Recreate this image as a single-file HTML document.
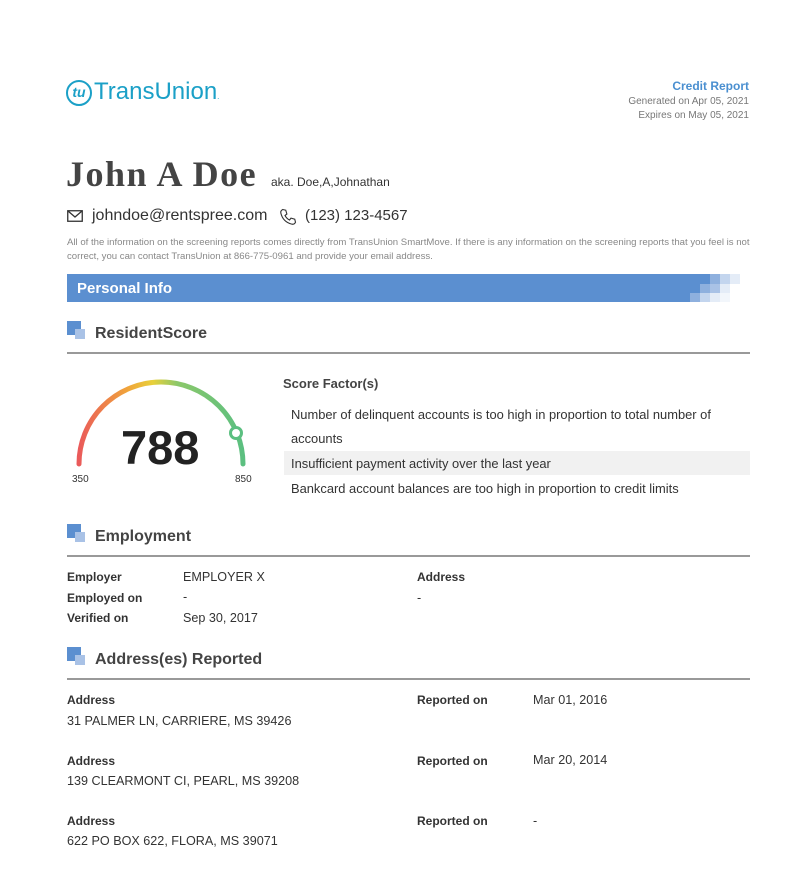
<!DOCTYPE html>
<html><head><meta charset="utf-8"><style>
*{margin:0;padding:0;box-sizing:border-box}
body{width:810px;height:883px;background:#fff;font-family:"Liberation Sans",sans-serif;color:#333;position:relative;overflow:hidden}
.a{position:absolute;white-space:nowrap}
.sec{position:absolute;left:67px;width:683px;border-bottom:2px solid #999;height:36px}
.sec .ic1{position:absolute;left:0;top:3px;width:14px;height:14px;background:#5b8fd0}
.sec .ic2{position:absolute;left:8px;top:11px;width:10px;height:10px;background:#a9c2e6}
.sec .t{position:absolute;left:28px;top:7px;font-size:16px;font-weight:bold;color:#444}
.lb{font-size:12px;font-weight:bold;color:#333}
.v{font-size:12.6px;color:#333}
</style></head><body>
<div class="a" style="left:66px;top:80px;width:26px;height:26px;border:2.5px solid #1ba0c7;border-radius:50%;color:#1ba0c7;font-size:14px;font-weight:bold;text-align:center;line-height:20px;font-style:italic">tu</div>
<div class="a" style="left:94px;top:78px;font-size:24px;color:#1ba0c7">TransUnion<span style="font-size:8px">.</span></div>
<div class="a" style="right:61px;top:79px;font-size:12px;font-weight:bold;color:#4a8fd0">Credit Report</div>
<div class="a" style="right:61px;top:96px;font-size:10px;color:#777">Generated on Apr 05, 2021</div>
<div class="a" style="right:61px;top:110px;font-size:10px;color:#777">Expires on May 05, 2021</div>
<div class="a" style="left:66px;top:153px;font-size:36px;font-weight:bold;font-family:'Liberation Serif',serif;color:#444;letter-spacing:1.5px">John A Doe</div>
<div class="a" style="left:271px;top:175px;font-size:12px;color:#333">aka. Doe,A,Johnathan</div>
<svg class="a" style="left:67px;top:210px" width="16" height="12"><rect x="0.75" y="0.75" width="14.5" height="10.5" fill="none" stroke="#333" stroke-width="1.3"/><path d="M1 1l7 6 7-6" fill="none" stroke="#333" stroke-width="1.3"/></svg>
<div class="a" style="left:92px;top:207px;font-size:16px">johndoe@rentspree.com</div>
<svg class="a" style="left:279px;top:208px" width="18" height="18" viewBox="0 0 24 24"><path d="M5 2l4 1 1.5 5-2.5 2c1.5 3 3 4.5 6 6l2-2.5 5 1.5 1 4c-1 2-3 3-5 2.5C9 19.5 4.5 15 2.5 7 2 5 3 3 5 2z" fill="none" stroke="#333" stroke-width="1.5"/></svg>
<div class="a" style="left:305px;top:207px;font-size:15px">(123) 123-4567</div>
<div class="a" style="left:67px;top:236px;font-size:9.6px;color:#888;line-height:14px;white-space:normal;width:690px">All of the information on the screening reports comes directly from TransUnion SmartMove. If there is any information on the screening reports that you feel is not correct, you can contact TransUnion at 866-775-0961 and provide your email address.</div>
<div class="a" style="left:67px;top:274px;width:625px;height:28px;background:#5b8fd0"></div>
<svg class="a" style="left:690px;top:274px" width="60" height="28">
<rect x="0" y="0" width="20" height="28" fill="#5b8fd0"/>
<rect x="20" y="0" width="10" height="10" fill="#8eb0de"/><rect x="30" y="0" width="10" height="10" fill="#c3d5ee"/><rect x="40" y="0" width="10" height="10" fill="#e4ecf7"/>
<rect x="10" y="10" width="10" height="9" fill="#8eb0de"/><rect x="20" y="10" width="10" height="9" fill="#a9c2e6"/><rect x="30" y="10" width="10" height="9" fill="#e4ecf7"/>
<rect x="0" y="19" width="10" height="9" fill="#8eb0de"/><rect x="10" y="19" width="10" height="9" fill="#c3d5ee"/><rect x="20" y="19" width="10" height="9" fill="#e4ecf7"/><rect x="30" y="19" width="10" height="9" fill="#f2f6fb"/>
</svg>
<div class="a" style="left:77px;top:280px;font-size:15px;font-weight:bold;color:#fff">Personal Info</div>
<div class="sec" style="top:318px"><div class="ic1"></div><div class="ic2"></div><div class="t">ResidentScore</div></div>
<svg class="a" style="left:70px;top:372px" width="190" height="100">
<defs><linearGradient id="g" x1="0" x2="1" y1="0" y2="0"><stop offset="0" stop-color="#ea5a5a"/><stop offset="0.3" stop-color="#f0a53a"/><stop offset="0.45" stop-color="#e8d03a"/><stop offset="0.6" stop-color="#8cc86a"/><stop offset="1" stop-color="#5bbf80"/></linearGradient></defs>
<path d="M9 92 A82 82 0 0 1 173 92" fill="none" stroke="url(#g)" stroke-width="5" stroke-linecap="round"/>
<circle cx="166" cy="61" r="5.5" fill="#fff" stroke="#5bbf80" stroke-width="3"/>
</svg>
<div class="a" style="left:121px;top:420px;font-size:47px;font-weight:bold;color:#222">788</div>
<div class="a" style="left:72px;top:474px;font-size:10px">350</div>
<div class="a" style="left:235px;top:474px;font-size:10px">850</div>
<div class="a" style="left:283px;top:376px;font-size:13px;font-weight:bold;color:#444">Score Factor(s)</div>
<div class="a" style="left:291px;top:407px;font-size:12.9px">Number of delinquent accounts is too high in proportion to total number of</div>
<div class="a" style="left:291px;top:431px;font-size:12.9px">accounts</div>
<div class="a" style="left:284px;top:451px;width:466px;height:24px;background:#f1f1f1"></div>
<div class="a" style="left:291px;top:456px;font-size:12.9px">Insufficient payment activity over the last year</div>
<div class="a" style="left:291px;top:481px;font-size:12.9px">Bankcard account balances are too high in proportion to credit limits</div>
<div class="sec" style="top:521px"><div class="ic1"></div><div class="ic2"></div><div class="t">Employment</div></div>
<div class="a lb" style="left:67px;top:570px">Employer</div>
<div class="a v" style="left:183px;top:570px">EMPLOYER X</div>
<div class="a lb" style="left:417px;top:570px">Address</div>
<div class="a lb" style="left:67px;top:591px">Employed on</div>
<div class="a v" style="left:183px;top:590px">-</div>
<div class="a v" style="left:417px;top:591px">-</div>
<div class="a lb" style="left:67px;top:611px">Verified on</div>
<div class="a v" style="left:183px;top:611px">Sep 30, 2017</div>
<div class="sec" style="top:644px"><div class="ic1"></div><div class="ic2"></div><div class="t">Address(es) Reported</div></div>
<div class="a lb" style="left:67px;top:693px">Address</div><div class="a lb" style="left:417px;top:693px">Reported on</div><div class="a v" style="left:533px;top:693px">Mar 01, 2016</div>
<div class="a v" style="left:67px;top:714px">31 PALMER LN, CARRIERE, MS 39426</div>
<div class="a lb" style="left:67px;top:754px">Address</div><div class="a lb" style="left:417px;top:754px">Reported on</div><div class="a v" style="left:533px;top:753px">Mar 20, 2014</div>
<div class="a v" style="left:67px;top:774px">139 CLEARMONT CI, PEARL, MS 39208</div>
<div class="a lb" style="left:67px;top:814px">Address</div><div class="a lb" style="left:417px;top:814px">Reported on</div><div class="a v" style="left:533px;top:814px">-</div>
<div class="a v" style="left:67px;top:834px">622 PO BOX 622, FLORA, MS 39071</div>
</body></html>
